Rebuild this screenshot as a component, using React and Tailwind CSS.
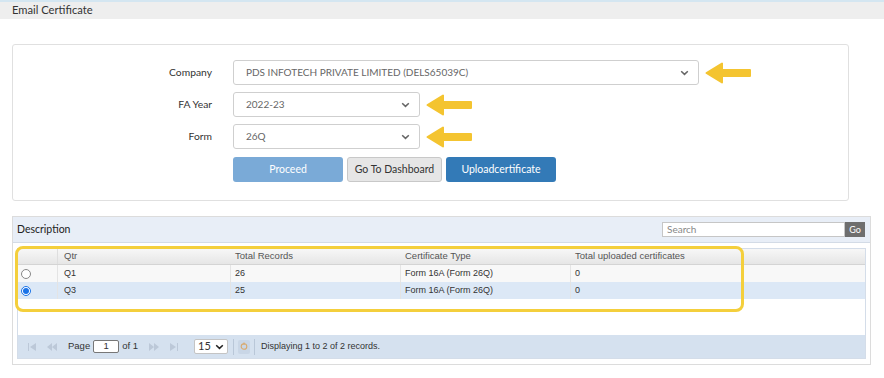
import React from 'react';

const Arrow = () => (
  <svg width="46" height="22" viewBox="0 0 46 22" className="shrink-0">
    <path d="M1.5 11 L17 1.5 L17 8 L45 8 L45 14 L17 14 L17 20.5 Z" fill="#f4c430" stroke="#f4c430" strokeWidth="2" strokeLinejoin="round" />
  </svg>
);

const Chevron = ({ color = '#444' }) => (
  <svg width="9" height="6" viewBox="0 0 9 6" className="shrink-0">
    <path d="M1.2 1.2 L4.5 4.4 L7.8 1.2" fill="none" stroke={color} strokeWidth="1.5" />
  </svg>
);

const SelectBox = ({ value, width }) => (
  <div className={`flex items-center justify-between h-[25px] border border-[#cfcfcf] rounded-[3px] bg-white pl-[12px] pr-[9px] text-[10px] text-[#666] ${width}`}>
    <span>{value}</span>
    <Chevron color="#666" />
  </div>
);

const FormRow = ({ label, children }) => (
  <div className="flex items-center">
    <div className="w-[199px] text-right text-[10.3px] text-[#333]">{label}</div>
    <div className="ml-[21px] flex items-center gap-[6px]">{children}</div>
  </div>
);

const PagerIcon = ({ d }) => (
  <svg width="10" height="8" viewBox="0 0 10 8" className="shrink-0">
    <path d={d} fill="#bcc8d8" />
  </svg>
);

const Radio = ({ checked }) => (
  <div className={`w-[10px] h-[10px] rounded-full border ${checked ? 'border-[#1a73e8] bg-white flex items-center justify-center' : 'border-[#888] bg-white'}`}>
    {checked && <div className="w-[6px] h-[6px] rounded-full bg-[#1a73e8]" />}
  </div>
);

const rows = [
  { qtr: 'Q1', total: '26', type: 'Form 16A (Form 26Q)', uploaded: '0', checked: false },
  { qtr: 'Q3', total: '25', type: 'Form 16A (Form 26Q)', uploaded: '0', checked: true },
];

const App = () => {
  return (
    <div className="w-[884px] h-[378px] bg-white overflow-hidden" style={{ fontFamily: 'Lato, "Open Sans", sans-serif' }}>
      {/* page title */}
      <div className="h-[19px] bg-[#eeeeee] border-t-[2px] border-[#d4e6f1] flex items-center pl-[12px] text-[11.2px] text-[#333]">
        Email Certificate
      </div>

      {/* form panel */}
      <div className="ml-[12px] mt-[25px] w-[837px] h-[157px] border border-[#e0e0e0] rounded-[3px] pt-[15px] flex flex-col gap-[7px]">
        <FormRow label="Company">
          <SelectBox value="PDS INFOTECH PRIVATE LIMITED (DELS65039C)" width="w-[466px]" />
          <Arrow />
        </FormRow>
        <FormRow label="FA Year">
          <SelectBox value="2022-23" width="w-[187px]" />
          <Arrow />
        </FormRow>
        <FormRow label="Form">
          <SelectBox value="26Q" width="w-[187px]" />
          <Arrow />
        </FormRow>
        <div className="flex ml-[220px] gap-[4px] mt-[1px]">
          <button className="w-[110px] h-[25px] rounded-[3px] bg-[#7aaad7] text-white text-[10.5px]">Proceed</button>
          <button className="w-[95px] h-[25px] rounded-[3px] bg-[#e6e6e6] border border-[#c8c8c8] text-[#333] text-[10.5px]">Go To Dashboard</button>
          <button className="w-[110px] h-[25px] rounded-[3px] bg-[#337ab7] text-white text-[10.5px]">Uploadcertificate</button>
        </div>
      </div>

      {/* grid panel */}
      <div className="ml-[12px] mt-[15px] w-[859px] h-[149px] border border-[#dcdcdc] flex flex-col">
        <div className="h-[26px] bg-[#e8eef7] border-b border-[#d3dbe6] flex items-center justify-between pl-[4px] pr-[5px]">
          <span className="text-[10.5px] text-[#222]">Description</span>
          <div className="flex items-center">
            <div className="w-[183px] h-[15px] border border-[#c6c6c6] bg-white text-[10px] text-[#888] pl-[4px] flex items-center">Search</div>
            <div className="w-[20px] h-[15px] bg-[#6e6e6e] text-white text-[9px] flex items-center justify-center">Go</div>
          </div>
        </div>

        <div className="relative mx-[4px] mt-[5px] h-[111px] border border-[#d4dde9] flex flex-col" style={{ fontFamily: '"Liberation Sans", Arial, sans-serif' }}>
          {/* header row */}
          <div className="h-[16px] flex text-[9.5px] text-[#555] bg-gradient-to-b from-[#f7f7f7] to-[#e6e6e6] border-b border-[#d4d4d4]">
            <div className="w-[40px] border-r border-[#dedede]" />
            <div className="w-[173px] pl-[6px] flex items-center">Qtr</div>
            <div className="w-[170px] pl-[4px] flex items-center">Total Records</div>
            <div className="w-[170px] pl-[4px] flex items-center">Certificate Type</div>
            <div className="w-[170px] pl-[4px] flex items-center">Total uploaded certificates</div>
            <div className="flex-1" />
          </div>
          {rows.map((r) => (
            <div key={r.qtr} className={`h-[17px] flex text-[9px] text-[#333] ${r.checked ? 'bg-[#dce8f6]' : 'bg-[#f8f8f8]'}`}>
              <div className="w-[40px] flex items-center pl-[3px] border-r border-[#e4e4e4]">
                <Radio checked={r.checked} />
              </div>
              <div className="w-[173px] pl-[6px] flex items-center border-r border-[#e4e4e4]">{r.qtr}</div>
              <div className="w-[170px] pl-[4px] flex items-center border-r border-[#e4e4e4]">{r.total}</div>
              <div className="w-[170px] pl-[4px] flex items-center border-r border-[#e4e4e4]">{r.type}</div>
              <div className="w-[170px] pl-[4px] flex items-center">{r.uploaded}</div>
            </div>
          ))}
          <div className="flex-1 bg-white" />

          {/* pager */}
          <div className="h-[23px] bg-[#d5e1ef] flex items-center text-[9.5px] text-[#333]">
            <div className="ml-[9px] flex items-center gap-[10px]">
              <PagerIcon d="M1 0 H2 V8 H1 Z M9 0 L3 4 L9 8 Z" />
              <PagerIcon d="M5 0 L0 4 L5 8 Z M10 0 L5 4 L10 8 Z" />
            </div>
            <span className="ml-[11px]">Page</span>
            <div className="ml-[3px] w-[26px] h-[13px] border border-[#777] rounded-[2px] bg-white flex items-center justify-center">1</div>
            <span className="ml-[3px]">of 1</span>
            <div className="ml-[11px] flex items-center gap-[10px]">
              <PagerIcon d="M0 0 L5 4 L0 8 Z M5 0 L10 4 L5 8 Z" />
              <PagerIcon d="M1 0 L7 4 L1 8 Z M8 0 H9 V8 H8 Z" />
            </div>
            <div className="ml-[15px] w-[34px] h-[15px] border border-[#c4c4c4] rounded-[2px] bg-white flex items-center justify-between pl-[3px] pr-[3px] text-[11px]" style={{ fontFamily: 'Lato, sans-serif' }}>
              <span>15</span>
              <Chevron color="#222" />
            </div>
            <div className="ml-[5px] w-px h-[16px] bg-[#b9c7d8]" />
            <div className="ml-[4px] w-[12px] h-[14px] rounded-[2px] bg-[#c9d6e6] flex items-center justify-center">
              <svg width="8" height="9" viewBox="0 0 8 9">
                <circle cx="4" cy="4.5" r="2.8" fill="none" stroke="#d9a86a" strokeWidth="1.1" />
                <path d="M4 0.5 V3" stroke="#d9a86a" strokeWidth="1.1" />
              </svg>
            </div>
            <div className="ml-[4px] w-px h-[16px] bg-[#b9c7d8]" />
            <span className="ml-[6px] text-[9px]">Displaying 1 to 2 of 2 records.</span>
          </div>

          {/* highlight annotation */}
          <div className="absolute left-[-3px] top-[-3px] w-[729px] h-[66px] border-[3px] border-[#f4cf3c] rounded-[8px] pointer-events-none" />
        </div>
      </div>
    </div>
  );
};

export default App;
